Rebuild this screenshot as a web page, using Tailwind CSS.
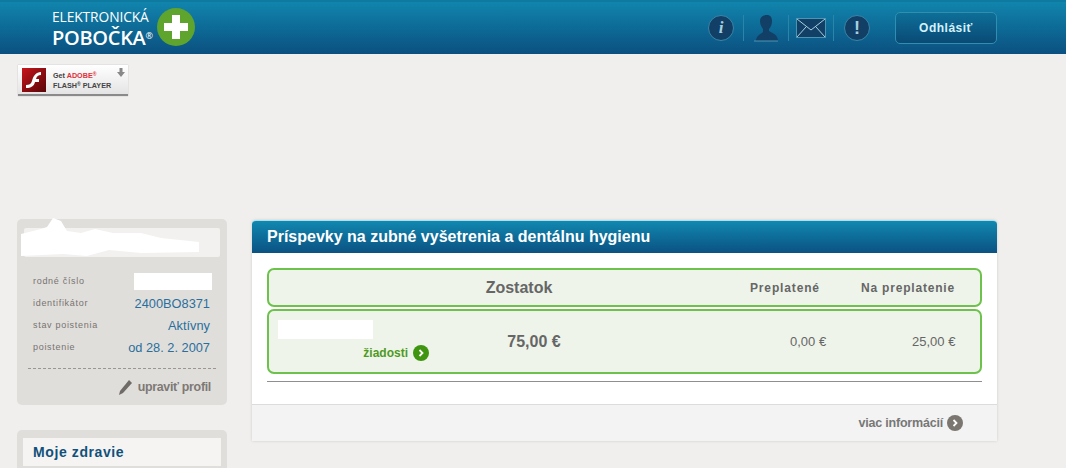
<!DOCTYPE html>
<html lang="sk">
<head>
    <meta charset="UTF-8" />
    <title>Elektronická pobočka</title>
    <script src="https://cdn.jsdelivr.net/npm/@tailwindcss/browser@4"></script>
</head>
<body class="bg-[#f0efed] h-[468px] w-[1066px] overflow-hidden font-['Liberation_Sans',Arial,sans-serif]">

    <!-- header -->
    <header class="h-[54px] bg-gradient-to-b from-[#1185ad] to-[#0b5080] border-t-2 border-[#0e7a9f] flex items-center pl-[52px] pr-[69px]">
        <div class="w-[105px] text-white font-['Open_Sans',sans-serif] -mt-[1px]">
            <div class="text-[13.8px] leading-[16px] tracking-[-0.1px] h-[16px] mt-[2px] whitespace-nowrap">ELEKTRONICKÁ</div>
            <div class="text-[20px] leading-[21px] font-semibold tracking-[-0.3px] whitespace-nowrap">POBOČKA<span class="text-[9px] align-[6px] font-normal">®</span></div>
        </div>
        <div class="w-[38px] h-[38px] -mt-[2px] rounded-full bg-[#5fa42c] flex items-center justify-center">
            <svg width="26" height="26" viewBox="0 0 26 26"><path d="M9 1h8v8h8v8h-8v8H9v-8H1V9h8z" fill="#fff"/></svg>
        </div>

        <div class="ml-auto flex items-center">
            <div class="w-[26px] h-[26px] rounded-full bg-[#123f66] border border-[#3b86a8] flex items-center justify-center text-[#a8cfe0] text-[17px] font-bold italic font-['Liberation_Serif',serif]">i</div>
            <div class="w-px h-[26px] bg-[#2a86a8] ml-[9px]"></div>
            <svg class="ml-[9px]" width="26" height="28" viewBox="0 0 26 28"><path d="M14 1c3 0 5 2 5 6 0 3-1 6-3 8v2c3 2 8 3 9 9v1H3v-1c1-5 5-6 7-8v-3C8 12 7 10 7 7c0-4 3-6 7-6z" fill="#123f66"/><path d="M1 27h24" stroke="#4c94b3"/></svg>
            <div class="w-px h-[26px] bg-[#2a86a8] ml-[9px]"></div>
            <svg class="ml-[7px]" width="30" height="20" viewBox="0 0 30 20"><rect x="0.5" y="0.5" width="29" height="19" fill="#123f66" stroke="#4c94b3"/><path d="M1 1l14 11L29 1M1 19l9-10M29 19l-9-10" fill="none" stroke="#a8cfe0"/></svg>
            <div class="w-px h-[26px] bg-[#2a86a8] ml-[7px]"></div>
            <div class="ml-[10px] w-[26px] h-[26px] rounded-full bg-[#123f66] border border-[#3b86a8] flex items-center justify-center text-[#a8cfe0] text-[18px] font-bold">!</div>
            <button class="ml-[25px] w-[102px] h-[32px] rounded-[5px] bg-gradient-to-b from-[#0d6f98] to-[#0a4a76] border border-[#2f8fb0] text-[#d4f2fb] text-[12px] font-bold tracking-[0.5px]">Odhlásiť</button>
        </div>
    </header>

    <!-- flash badge -->
    <div class="ml-[18px] mt-[11px] w-[110px] h-[31px] bg-gradient-to-b from-white to-[#e4e4e4] border-b-2 border-[#8a8a8a] shadow-[0_0_1px_#aaa] flex items-center pl-[4px] relative">
        <div class="w-[24px] h-[24px] bg-gradient-to-br from-[#c8161c] to-[#5a0608] flex items-center justify-center">
            <svg width="18" height="18" viewBox="0 0 18 18"><path d="M16 1v3c-3 0-4 1-5 4h3v3h-4c-1 4-4 6-9 6v-3c3 0 5-1 6-4 1-5 4-9 9-9z" fill="#fff"/></svg>
        </div>
        <div class="ml-[7px] text-[7.2px] leading-[9px] font-bold text-[#444]">
            <div>Get <span class="text-[#e0303a]">ADOBE<span class="text-[5px] align-[2px]">®</span></span></div>
            <div class="whitespace-nowrap">FLASH<span class="text-[5px] align-[2px]">®</span> PLAYER</div>
        </div>
        <svg class="absolute right-[3px] top-[3px]" width="8" height="9" viewBox="0 0 8 9"><path d="M2.5 0h3v4H8L4 9 0 4h2.5z" fill="#888"/></svg>
    </div>

    <div class="flex items-start mt-[124px] pl-[17px]">

        <!-- sidebar -->
        <aside class="w-[210px] shrink-0 -mt-[1px]">
            <div class="h-[186px] bg-[#e0dedb] rounded-[5px] pt-[9px] px-[7px]">
                <div class="h-[29px] bg-[#f2f1ef] rounded-[2px] relative">
                    <svg class="absolute -left-[3px] -top-[10px]" width="182" height="40" viewBox="0 0 182 40"><path d="M0 16 L20 11 L26 9 L32 0 L40 3 L46 13 L60 15 L74 11 L92 15 L120 15 L140 20 L178 24 L178 34 L120 35 L88 32 L66 38 L42 36 L0 38Z" fill="#fff"/></svg>
                </div>
                <dl class="mt-[15px] pl-[9px] pr-[10px] flex flex-col gap-[3px]">
                    <div class="flex items-center justify-between h-[19px]">
                        <dt class="text-[9px] tracking-[0.7px] text-[#77736f]">rodné číslo</dt>
                        <dd class="w-[78px] h-[17px] bg-white -mr-[2px]"></dd>
                    </div>
                    <div class="flex items-center justify-between h-[19px]">
                        <dt class="text-[9px] tracking-[0.7px] text-[#77736f]">identifikátor</dt>
                        <dd class="text-[12.8px] text-[#2a6f9c]">2400BO8371</dd>
                    </div>
                    <div class="flex items-center justify-between h-[19px]">
                        <dt class="text-[9px] tracking-[0.7px] text-[#77736f]">stav poistenia</dt>
                        <dd class="text-[12.8px] text-[#2a6f9c]">Aktívny</dd>
                    </div>
                    <div class="flex items-center justify-between h-[19px]">
                        <dt class="text-[9px] tracking-[0.7px] text-[#77736f]">poistenie</dt>
                        <dd class="text-[12.8px] text-[#2a6f9c]">od 28. 2. 2007</dd>
                    </div>
                </dl>
                <div class="mt-[11px] mx-[4px] border-t border-dashed border-[#9a9692]"></div>
                <div class="mt-[9px] pr-[9px] flex items-center justify-end gap-[5px] text-[#7d7975] text-[12.4px] font-bold tracking-[-0.3px]">
                    <svg width="15" height="17" viewBox="0 0 15 17"><path d="M11 1l3 3-9 10-4 2 1-4z" fill="#6f6b67"/></svg>
                    <span>upraviť profil</span>
                </div>
            </div>

            <div class="mt-[25px] h-[60px] bg-[#e0dedb] rounded-[5px] pt-[8px] px-[6px]">
                <div class="h-[28px] bg-[#f5f4f3] pl-[10px] text-[14px] leading-[28px] font-bold tracking-[0.6px] text-[#11507a]">Moje zdravie</div>
            </div>
        </aside>

        <!-- main card -->
        <main class="ml-[25px] w-[745px] h-[221px] bg-white shadow-[0_0_3px_#cfcdca] rounded-t-[4px] flex flex-col">
            <div class="h-[33px] bg-gradient-to-b from-[#1188b0] to-[#0b5282] border-t border-[#a5e3f2] rounded-t-[4px] pl-[15px] text-white text-[16px] leading-[32px] font-bold">Príspevky na zubné vyšetrenia a dentálnu hygienu</div>

            <div class="px-[15px] pt-[15px]">
                <div class="h-[39px] bg-[#eef4ea] border-2 border-[#6cc24a] rounded-[7px] grid grid-cols-[180px_140px_1fr_111px_119px] items-center text-[#666]">
                    <div></div>
                    <div class="text-center text-[16px] font-bold">Zostatok</div>
                    <div></div>
                    <div class="text-[12px] font-bold tracking-[0.85px] whitespace-nowrap">Preplatené</div>
                    <div class="text-[12px] font-bold tracking-[0.8px] whitespace-nowrap">Na preplatenie</div>
                </div>
                <div class="mt-[2px] h-[65px] bg-[#eef4ea] border-2 border-[#6cc24a] rounded-[7px] grid grid-cols-[180px_140px_1fr_111px_119px] items-center text-[#666]">
                    <div class="relative h-full">
                        <div class="absolute left-[9px] top-[9px] w-[95px] h-[19px] bg-white"></div>
                        <div class="absolute right-[20px] bottom-[10px] flex items-center gap-[5px] text-[#4e9a1e] text-[12px] font-bold">
                            <span>žiadosti</span>
                            <span class="w-[16px] h-[16px] rounded-full bg-[#3f950f] flex items-center justify-center">
                                <svg width="8" height="8" viewBox="0 0 8 8"><path d="M2.5 1l3 3-3 3" fill="none" stroke="#fff" stroke-width="1.8"/></svg>
                            </span>
                        </div>
                    </div>
                    <div class="text-center text-[16px] font-bold pl-[30px] whitespace-nowrap">75,00 €</div>
                    <div></div>
                    <div class="text-[13px] pl-[40px] whitespace-nowrap">0,00 €</div>
                    <div class="text-[13px] pl-[51px] whitespace-nowrap">25,00 €</div>
                </div>
                <div class="mt-[7px] border-t border-[#8f8f8f]"></div>
            </div>

            <div class="mt-auto h-[37px] bg-[#f3f3f3] border-t border-[#dcdcdc] flex items-center justify-end gap-[4px] pr-[34px] text-[#777] text-[12.5px] font-bold tracking-[-0.2px]">
                <span>viac informácií</span>
                <span class="w-[16px] h-[16px] rounded-full bg-[#7b7670] flex items-center justify-center">
                    <svg width="8" height="8" viewBox="0 0 8 8"><path d="M2.5 1l3 3-3 3" fill="none" stroke="#fff" stroke-width="1.8"/></svg>
                </span>
            </div>
        </main>
    </div>
</body>
</html>
